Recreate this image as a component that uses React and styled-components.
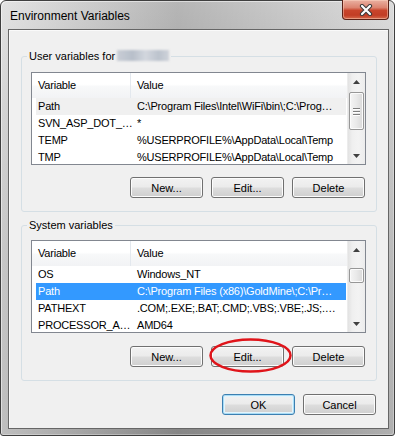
import React from 'react'
import styled, { createGlobalStyle } from 'styled-components'

const GlobalStyle = createGlobalStyle`
    html, body {
        margin: 0;
        padding: 0;
        background: #ffffff;
    }
    body {
        font-family: "Liberation Sans", Arial, sans-serif;
        font-size: 11px;
        color: #000;
    }
`

const Window = styled.div`
    box-sizing: border-box;
    width: 395px;
    height: 436px;
    display: flex;
    flex-direction: column;
    border: 1px solid #3f3f3f;
    border-radius: 6px 6px 3px 3px;
    padding: 0 5px 6px 7px;
    background:
        linear-gradient(to right, rgba(255,255,255,0.35), rgba(0,0,0,0.14) 45%, rgba(0,0,0,0.04) 75%, rgba(255,255,255,0.2)),
        linear-gradient(#d4d4d4, #bdbdbd 25%, #a9a9a9 60%, #9c9c9c);
    box-shadow: inset 1px 1px 0 rgba(255,255,255,0.5), inset -1px -1px 0 rgba(255,255,255,0.3);
`

const TitleBar = styled.div`
    height: 28px;
    display: flex;
    align-items: flex-start;
    justify-content: space-between;
`

const Title = styled.div`
    padding: 8px 0 0 2px;
    font-size: 12px;
    line-height: 15px;
    color: #000;
`

const CloseButton = styled.div`
    box-sizing: border-box;
    width: 47px;
    height: 20px;
    margin-top: -1px;
    display: flex;
    align-items: center;
    justify-content: center;
    border: 1px solid #5a2117;
    border-top: none;
    border-radius: 0 0 4px 4px;
    background: linear-gradient(#eab1a2 0%, #dc8470 40%, #c8442b 55%, #c23d25 80%, #d66a4c 100%);
    box-shadow: inset 0 0 0 1px rgba(255,220,200,0.45);
`

const Client = styled.div`
    flex: 1;
    display: flex;
    flex-direction: column;
    border: 1px solid #666;
    background: #f0f0f0;
    padding: 0 11px 0 12px;
    box-shadow: inset 1px 1px 0 #fafafa;
`

const Group = styled.fieldset`
    margin: ${p => p.$gap}px 0 0 0;
    padding: ${p => p.$top}px 10px 13px 9px;
    border: 1px solid #d5dfe5;
    border-radius: 3px;
    min-width: 0;
`

const Legend = styled.legend`
    margin-left: -4px;
    padding: 0 2px;
    font-size: 11px;
    line-height: 15px;
`

const Blurred = styled.span`
    display: inline-block;
    width: 52px;
    height: 11px;
    margin-left: 2px;
    vertical-align: -1px;
    background: linear-gradient(to right, #c9ced6, #b8bfca 30%, #d3d7de 55%, #bcc3cd 80%, #cfd3da);
    filter: blur(1px);
`

const List = styled.div`
    box-sizing: border-box;
    height: 93px;
    display: flex;
    border: 1px solid #828790;
    background: #fff;
    overflow: hidden;
`

const ListBody = styled.div`
    flex: 1;
    min-width: 0;
    letter-spacing: -0.2px;
`

const Header = styled.div`
    height: 25px;
    display: flex;
    background: linear-gradient(#ffffff 0%, #ffffff 45%, #f7f8f9 55%, #f2f3f5 100%);
`

const HeaderCell = styled.div`
    box-sizing: border-box;
    width: ${p => p.$w ? `${p.$w}px` : 'auto'};
    flex: ${p => p.$w ? 'none' : '1'};
    padding-left: 6px;
    line-height: 25px;
    border-right: ${p => p.$w ? '1px solid #e3e8ee' : 'none'};
    white-space: nowrap;
`

const Row = styled.div`
    height: 17px;
    display: flex;
    margin: 0 1px 0 4px;
    line-height: 17px;
    white-space: nowrap;
    background: ${p => p.$sel === 'blue' ? '#3399ff' : p.$sel === 'gray' ? '#f0f0f0' : 'transparent'};
    color: ${p => p.$sel === 'blue' ? '#fff' : '#000'};
`

const NameCell = styled.div`
    width: 94px;
    flex: none;
    box-sizing: border-box;
    padding-left: 2px;
`

const ValueCell = styled.div`
    flex: 1;
    min-width: 0;
    padding-left: 7px;
    overflow: hidden;
`

const ScrollBar = styled.div`
    width: 17px;
    flex: none;
    display: flex;
    flex-direction: column;
    background: linear-gradient(to right, #e2e2e2, #efefef 25%, #f3f3f3 60%, #ececec);
    border-left: 1px solid #ececec;
`

const Arrow = styled.div`
    height: 17px;
    flex: none;
    display: flex;
    align-items: center;
    justify-content: center;
`

const Track = styled.div`
    flex: 1;
    padding: ${p => p.$offset}px 0 0 0;
`

const Thumb = styled.div`
    box-sizing: border-box;
    height: ${p => p.$h}px;
    margin: 0 1px;
    display: flex;
    flex-direction: column;
    align-items: center;
    justify-content: center;
    gap: 2px;
    border: 1px solid #979797;
    border-radius: 2px;
    background: linear-gradient(to right, #f5f5f5, #e9e9e9 50%, #d9d9d9);
    box-shadow: inset 0 0 0 1px #fbfbfb;
`

const Grip = styled.div`
    width: 7px;
    height: 1px;
    background: #7e7e7e;
    box-shadow: 0 1px 0 #fff;
`

const ButtonRow = styled.div`
    display: flex;
    justify-content: flex-end;
    gap: 8px;
    margin-top: ${p => p.$gap}px;
    padding-right: ${p => p.$pr}px;
`

const Button = styled.div`
    position: relative;
    box-sizing: border-box;
    width: 73px;
    height: 21px;
    display: flex;
    align-items: center;
    justify-content: center;
    border: 1px solid ${p => p.$default ? '#3c7fb1' : '#707070'};
    border-radius: 3px;
    background: linear-gradient(#f2f2f2 0%, #ebebeb 48%, #dddddd 52%, #cfcfcf 100%);
    box-shadow: ${p => p.$default
        ? 'inset 0 0 0 1px #a9dcf5, inset 0 0 0 2px #e4f4fc'
        : 'inset 0 0 0 1px #fcfcfc'};
    font-size: 11px;
    color: #000;
`

const Marker = styled.svg`
    position: absolute;
    left: -3px;
    top: -9px;
    width: 83px;
    height: 35px;
    overflow: visible;
    pointer-events: none;
`

const Footer = styled.div`
    display: flex;
    justify-content: flex-end;
    gap: 8px;
    margin-top: 13px;
    padding-right: 1px;
`

const UpArrow = () => (
    <svg width="7" height="4" viewBox="0 0 7 4"><polygon points="0,4 7,4 3.5,0" fill="#404040" /></svg>
)
const DownArrow = () => (
    <svg width="7" height="4" viewBox="0 0 7 4"><polygon points="0,0 7,0 3.5,4" fill="#404040" /></svg>
)

const VarList = ({ rows, thumb }) => (
    <List>
        <ListBody>
            <Header>
                <HeaderCell $w={99}>Variable</HeaderCell>
                <HeaderCell>Value</HeaderCell>
            </Header>
            {rows.map(r => (
                <Row key={r.name + r.value} $sel={r.sel}>
                    <NameCell>{r.name}</NameCell>
                    <ValueCell>{r.value}</ValueCell>
                </Row>
            ))}
        </ListBody>
        <ScrollBar>
            <Arrow><UpArrow /></Arrow>
            <Track $offset={thumb.offset}>
                <Thumb $h={thumb.h}>
                    {thumb.grip && <><Grip /><Grip /><Grip /></>}
                </Thumb>
            </Track>
            <Arrow><DownArrow /></Arrow>
        </ScrollBar>
    </List>
)

const userRows = [
    { name: 'Path', value: 'C:\\Program Files\\Intel\\WiFi\\bin\\;C:\\Prog…', sel: 'gray' },
    { name: 'SVN_ASP_DOT_…', value: '*' },
    { name: 'TEMP', value: '%USERPROFILE%\\AppData\\Local\\Temp' },
    { name: 'TMP', value: '%USERPROFILE%\\AppData\\Local\\Temp' },
]

const systemRows = [
    { name: 'OS', value: 'Windows_NT' },
    { name: 'Path', value: 'C:\\Program Files (x86)\\GoldMine\\;C:\\Pr…', sel: 'blue' },
    { name: 'PATHEXT', value: '.COM;.EXE;.BAT;.CMD;.VBS;.VBE;.JS;.…' },
    { name: 'PROCESSOR_A…', value: 'AMD64' },
]

export default function App() {
    return (
        <>
            <GlobalStyle />
            <Window>
                <TitleBar>
                    <Title>Environment Variables</Title>
                    <CloseButton>
                        <svg width="14" height="12" viewBox="0 0 14 12">
                            <path d="M3 2 L11 10 M11 2 L3 10" stroke="#3a3a3a" strokeWidth="4.2" strokeLinecap="round" />
                            <path d="M3 2 L11 10 M11 2 L3 10" stroke="#ffffff" strokeWidth="2.2" strokeLinecap="round" />
                        </svg>
                    </CloseButton>
                </TitleBar>
                <Client>
                    <Group $gap={19} $top={8}>
                        <Legend>User variables for<Blurred /></Legend>
                        <VarList rows={userRows} thumb={{ offset: 2, h: 38, grip: true }} />
                        <ButtonRow $gap={12} $pr={1}>
                            <Button>New...</Button>
                            <Button>Edit...</Button>
                            <Button>Delete</Button>
                        </ButtonRow>
                    </Group>
                    <Group $gap={6} $top={7}>
                        <Legend>System variables</Legend>
                        <VarList rows={systemRows} thumb={{ offset: 10, h: 15, grip: false }} />
                        <ButtonRow $gap={13} $pr={1}>
                            <Button>New...</Button>
                            <Button>
                                Edit...
                                <Marker viewBox="0 0 83 35">
                                    <ellipse cx="41.5" cy="17.5" rx="40" ry="16" fill="none" stroke="#e0141a" strokeWidth="2.5" />
                                </Marker>
                            </Button>
                            <Button>Delete</Button>
                        </ButtonRow>
                    </Group>
                    <Footer>
                        <Button $default>OK</Button>
                        <Button>Cancel</Button>
                    </Footer>
                </Client>
            </Window>
        </>
    )
}
